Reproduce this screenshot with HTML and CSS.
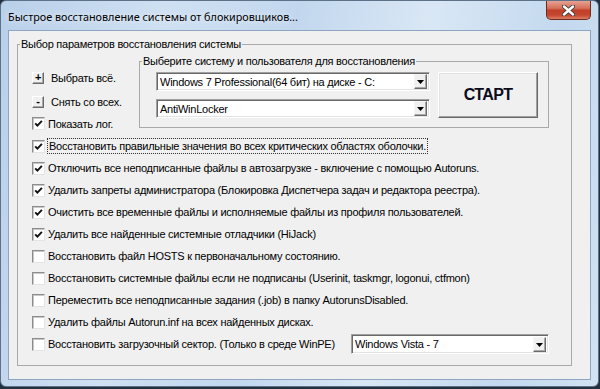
FILE: index.html
```html
<!DOCTYPE html>
<html lang="ru">
<head>
    <meta charset="UTF-8">
    <title>Быстрое восстановление системы от блокировщиков...</title>
    <link rel="stylesheet" href="styles.css">
</head>
<body>
    <div class="window">
        <div class="titlebar">
            <span class="title">Быстрое восстановление системы от блокировщиков...</span>
            <button class="close">
                <svg width="13" height="11" viewBox="0 0 13 11">
                    <path d="M2 1.5 L11 9.5 M11 1.5 L2 9.5" stroke="#3b3b3b" stroke-width="4.2" stroke-linecap="round"/>
                    <path d="M2 1.5 L11 9.5 M11 1.5 L2 9.5" stroke="#fff" stroke-width="2.4" stroke-linecap="round"/>
                </svg>
            </button>
        </div>
        <div class="client">
            <fieldset class="group main">
                <legend>Выбор параметров восстановления системы</legend>
                <div class="top">
                    <div class="side">
                        <div class="side-row first"><span class="mini-btn">+</span>Выбрать всё.</div>
                        <div class="side-row"><span class="mini-btn">-</span>Снять со всех.</div>
                        <div class="side-row last"><span class="box on"></span>Показать лог.</div>
                    </div>
                    <fieldset class="group pick">
                        <legend>Выберите систему и пользователя для восстановления</legend>
                        <div class="pick-body">
                            <div class="combos">
                                <div class="combo wide"><span class="combo-text">Windows 7 Professional(64 бит) на диске - C:</span><span class="drop"></span></div>
                                <div class="combo wide"><span class="combo-text">AntiWinLocker</span><span class="drop"></span></div>
                            </div>
                            <button class="start">СТАРТ</button>
                        </div>
                    </fieldset>
                </div>
                <ul class="options">
                    <li><span class="box on"></span><span class="focus">Восстановить правильные значения во всех критических областях оболочки.</span></li>
                    <li><span class="box on"></span>Отключить все неподписанные файлы в автозагрузке - включение с помощью Autoruns.</li>
                    <li><span class="box on"></span>Удалить запреты администратора (Блокировка Диспетчера задач и редактора реестра).</li>
                    <li><span class="box on"></span>Очистить все временные файлы и исполняемые файлы из профиля пользователей.</li>
                    <li><span class="box on"></span>Удалить все найденные системные отладчики (HiJack)</li>
                    <li><span class="box"></span>Восстановить файл HOSTS к первоначальному состоянию.</li>
                    <li><span class="box"></span>Восстановить системные файлы если не подписаны (Userinit, taskmgr, logonui, ctfmon)</li>
                    <li><span class="box"></span>Переместить все неподписанные задания (.job) в папку AutorunsDisabled.</li>
                    <li><span class="box"></span>Удалить файлы Autorun.inf на всех найденных дисках.</li>
                    <li><span class="box"></span>Восстановить загрузочный сектор. (Только в среде WinPE)
                        <div class="combo boot"><span class="combo-text">Windows Vista - 7</span><span class="drop"></span></div>
                    </li>
                </ul>
            </fieldset>
        </div>
    </div>
</body>
</html>
```

FILE: styles.css
```css
body {
    margin: 0;
    background-color: #23303d;
    font-family: "Liberation Sans", Arial, sans-serif;
    font-size: 11px;
    letter-spacing: -0.25px;
    color: #000;
}
.window {
    width: 599px;
    height: 387px;
    box-sizing: border-box;
    padding: 0 7px 7px 7px;
    border: 1px solid #5d7189;
    border-radius: 6px;
    background: linear-gradient(100deg, #b9d0ea 0%, #cfe0f2 25%, #c2d7ee 45%, #d9e7f5 65%, #c4d9ef 85%, #d0e2f3 100%);
}
.titlebar {
    height: 29px;
    display: flex;
    justify-content: space-between;
    align-items: flex-start;
}
.title {
    padding-top: 8px;
    font-family: "Noto Sans", "Liberation Sans", sans-serif;
    font-size: 10.8px;
    letter-spacing: 0;
    color: #000;
    text-shadow: 0 0 6px rgba(255, 255, 255, 0.9);
}
.close {
    width: 45px;
    height: 19px;
    padding: 0;
    border: 1px solid #6e2b1f;
    border-top: none;
    border-radius: 0 0 5px 5px;
    background: linear-gradient(#e6a293 0%, #d6705b 40%, #c23f27 52%, #c4462e 78%, #dc7e63 100%);
    display: flex;
    align-items: center;
    justify-content: center;
}
.client {
    height: 350px;
    box-sizing: border-box;
    border: 1px solid #8ea5c1;
    background-color: #f0f0f0;
    padding-top: 7px;
}
.group {
    margin: 0;
    padding: 0;
    border: 1px solid #a9a9a9;
    min-width: 0;
}
.group legend {
    padding: 0 1px;
    margin-left: 2px;
    line-height: 13px;
}
.main {
    margin: 0 18px 0 8px;
}
.top {
    display: flex;
    height: 83px;
}
.side {
    width: 107px;
    padding: 15px 0 0 14px;
}
.side-row {
    display: flex;
    align-items: center;
    height: 24px;
}
.side-row.last {
    height: 21px;
    margin-top: -1px;
}
.mini-btn {
    width: 10px;
    height: 10px;
    margin-right: 7px;
    border: 1px solid;
    border-color: #fff #6b6b6b #6b6b6b #fff;
    box-shadow: inset -1px -1px 0 #a8a8a8;
    background-color: #f0f0f0;
    font-size: 11px;
    font-weight: bold;
    line-height: 9px;
    text-align: center;
}
.box {
    width: 11px;
    height: 11px;
    margin-right: 3px;
    flex-shrink: 0;
    border: 1px solid;
    border-color: #8d8d8d #e4e4e4 #e4e4e4 #8d8d8d;
    box-shadow: inset 1px 1px 0 #c8c8c8;
    background-color: #fff;
}
.box.on {
    background: #fff url("data:image/svg+xml;utf8,<svg xmlns='http://www.w3.org/2000/svg' width='11' height='11'><path d='M2.2 5.3 L4.4 7.6 L8.9 2.8' fill='none' stroke='%23111' stroke-width='1.9'/></svg>") no-repeat center;
}
.pick {
    margin-top: 4px;
    width: 410px;
    height: 73px;
    box-sizing: border-box;
}
.pick-body {
    display: flex;
    padding: 4px 0 0 16px;
}
.combos {
    display: flex;
    flex-direction: column;
    gap: 8px;
}
.combo {
    height: 19px;
    box-sizing: border-box;
    display: flex;
    align-items: center;
    justify-content: space-between;
    border: 1px solid;
    border-color: #a0a0a0 #fff #fff #a0a0a0;
    box-shadow: inset 1px 1px 0 #696969, inset -1px -1px 0 #e3e3e3;
    background-color: #fff;
    padding: 1px 2px 1px 3px;
}
.combo.wide {
    width: 274px;
}
.combo.boot {
    width: 198px;
    height: 20px;
    margin: 0 22px 0 auto;
}
.drop {
    width: 11px;
    height: 13px;
    border: 1px solid;
    border-color: #f4f4f4 #6b6b6b #6b6b6b #f4f4f4;
    box-shadow: inset -1px -1px 0 #a8a8a8;
    background: #f0f0f0 url("data:image/svg+xml;utf8,<svg xmlns='http://www.w3.org/2000/svg' width='7' height='4'><path d='M0 0 H7 L3.5 4 Z' fill='%23000'/></svg>") no-repeat 2px 5px;
}
.start {
    width: 100px;
    height: 46px;
    margin-left: 8px;
    border: 1px solid;
    border-color: #fff #696969 #696969 #fff;
    box-shadow: inset -1px -1px 0 #a0a0a0, inset 1px 1px 0 #e3e3e3;
    background-color: #f0f0f0;
    font-family: "Liberation Sans", Arial, sans-serif;
    font-size: 16px;
    font-weight: bold;
    letter-spacing: -0.6px;
    color: #0b0b1c;
}
.options {
    list-style: none;
    margin: 1px 0 0 0;
    padding: 0 0 10px 14px;
}
.options li {
    display: flex;
    align-items: center;
    height: 22px;
    white-space: nowrap;
}
.focus {
    border: 1px dotted #333;
    padding: 1px;
    margin-left: -1px;
}
```
